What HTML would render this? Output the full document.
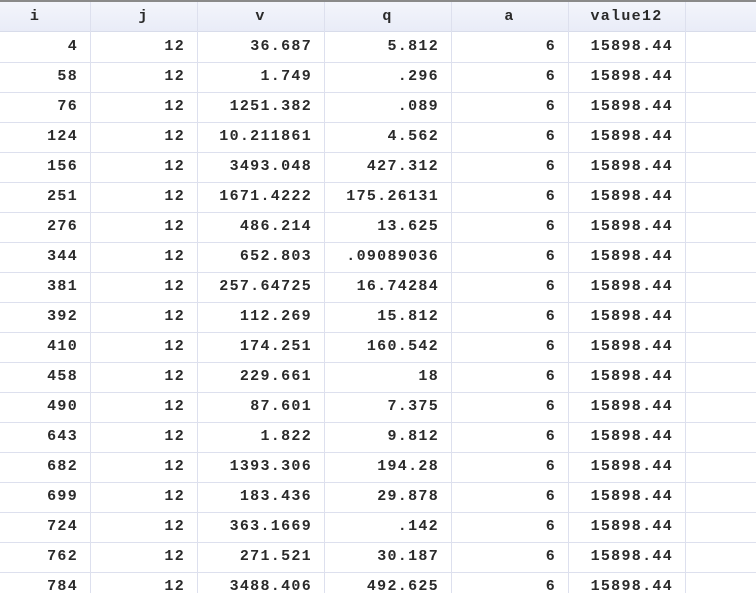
<!DOCTYPE html>
<html><head><style>
html,body{margin:0;padding:0;width:756px;height:593px;overflow:hidden;background:#fff;}
body{position:relative;font-family:"Liberation Mono",monospace;font-weight:bold;font-size:15px;color:#2a2a2a;letter-spacing:1.3px;}
.top{position:absolute;left:0;top:0;width:756px;height:2px;background:#8a8a8a;}
.hdr{position:absolute;left:0;top:2px;width:756px;height:30px;background:linear-gradient(#f3f5fc,#e9ecf7);border-bottom:1px solid #d8dcea;box-sizing:border-box;}
.vl{position:absolute;top:2px;width:1px;height:591px;background:#dde0ee;}
.hl{position:absolute;left:0;width:756px;height:1px;background:#dde0ee;}
.c{position:absolute;height:30px;line-height:30px;white-space:pre;}
.h{text-align:center;}
.r{text-align:right;}
</style></head><body>
<div class="top"></div>
<div class="hdr"></div>
<div id="g"></div>
<script>
var cols=[[-20,90],[90,197],[197,324],[324,451],[451,568],[568,685]];
var names=["i","j","v","q","a","value12"];
var data=[
["4","12","36.687","5.812"],["58","12","1.749",".296"],["76","12","1251.382",".089"],
["124","12","10.211861","4.562"],["156","12","3493.048","427.312"],["251","12","1671.4222","175.26131"],
["276","12","486.214","13.625"],["344","12","652.803",".09089036"],["381","12","257.64725","16.74284"],
["392","12","112.269","15.812"],["410","12","174.251","160.542"],["458","12","229.661","18"],
["490","12","87.601","7.375"],["643","12","1.822","9.812"],["682","12","1393.306","194.28"],
["699","12","183.436","29.878"],["724","12","363.1669",".142"],["762","12","271.521","30.187"],
["784","12","3488.406","492.625"]];
var h="";
[90,197,324,451,568,685].forEach(function(x){h+='<div class="vl" style="left:'+x+'px"></div>';});
for(var k=1;k<=19;k++)h+='<div class="hl" style="top:'+(32+30*k)+'px"></div>';
cols.forEach(function(c,i){h+='<div class="c h" style="top:2px;left:'+c[0]+'px;width:'+(c[1]-c[0])+'px">'+names[i]+'</div>';});
data.forEach(function(r,k){
 var row=r.concat(["6","15898.44"]);
 row.forEach(function(v,i){var c=cols[i];
  h+='<div class="c r" style="top:'+(32+30*k)+'px;left:'+c[0]+'px;width:'+(c[1]-c[0]-12)+'px">'+v+'</div>';});
});
document.getElementById("g").innerHTML=h;
</script>
</body></html>
